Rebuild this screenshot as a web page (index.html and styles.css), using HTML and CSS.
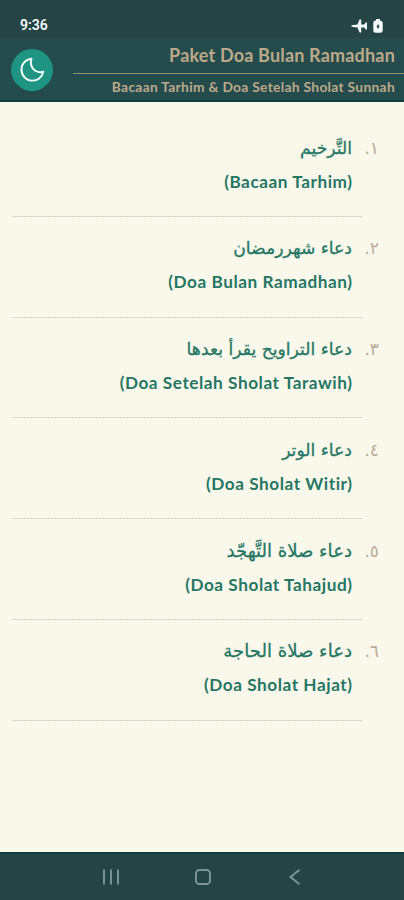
FILE: index.html
```html
<!DOCTYPE html>
<html lang="id">
<head>
    <meta charset="UTF-8">
    <meta name="viewport" content="width=device-width, initial-scale=1.0">
    <title>Paket Doa Bulan Ramadhan</title>
    <link rel="stylesheet" href="styles.css">
</head>
<body>
    <div class="status-bar">
        <span class="time">9:36</span>
        <div class="status-icons">
            <svg width="17" height="16" viewBox="0 0 17 16" fill="#f4fafa">
                <path d="M0.500 7.200L6.500 6.500L8.500 1.500H10.300L10.200 6.600H13.500L14.500 4.500H16V11.500H14.500L13.500 9.400H10.200L10.300 14.500H8.500L6.500 9.500L0.500 8.800Z"/>
            </svg>
            <svg width="10" height="14" viewBox="0 0 10 14">
                <path d="M3 0H7V1.500Q9.700 1.700 9.700 4V11.500Q9.700 13.700 7.500 13.700H2.500Q0.300 13.700 0.300 11.500V4Q0.300 1.700 3 1.500Z" fill="#f4fafa"/>
                <path d="M5 5L6.500 7.500L5 10L3.700 7.500Z" fill="#244446"/>
            </svg>
        </div>
    </div>

    <header class="header">
        <button class="theme-btn" aria-label="Mode malam">
            <svg width="26" height="26" viewBox="0 0 26 26" fill="none" stroke="#f2fffc" stroke-width="1.900" stroke-linejoin="round">
                <path d="M12.500 1.700A11 11 0 1 0 24.300 14.600C17 17.500 9.800 10 12.500 1.700Z"/>
            </svg>
        </button>
        <div class="titles">
            <h1>Paket Doa Bulan Ramadhan</h1>
            <h2>Bacaan Tarhim &amp; Doa Setelah Sholat Sunnah</h2>
        </div>
    </header>

    <main class="list">
        <div class="item">
            <div class="number">١.</div>
            <div class="arabic">التَّرخيم</div>
            <div class="latin">(Bacaan Tarhim)</div>
        </div>
        <div class="item">
            <div class="number">٢.</div>
            <div class="arabic">دعاء شهررمضان</div>
            <div class="latin">(Doa Bulan Ramadhan)</div>
        </div>
        <div class="item">
            <div class="number">٣.</div>
            <div class="arabic">دعاء التراويح يقرأ بعدها</div>
            <div class="latin">(Doa Setelah Sholat Tarawih)</div>
        </div>
        <div class="item">
            <div class="number">٤.</div>
            <div class="arabic">دعاء الوتر</div>
            <div class="latin">(Doa Sholat Witir)</div>
        </div>
        <div class="item">
            <div class="number">٥.</div>
            <div class="arabic wide">دعاء صلاة التَّهجّد</div>
            <div class="latin">(Doa Sholat Tahajud)</div>
        </div>
        <div class="item">
            <div class="number">٦.</div>
            <div class="arabic wide">دعاء صلاة الحاجة</div>
            <div class="latin">(Doa Sholat Hajat)</div>
        </div>
    </main>

    <nav class="nav-bar">
        <svg width="16" height="16" viewBox="0 0 16 16" stroke="#7d9798" stroke-width="1.900">
            <path d="M1 0.500V15.500M8 0.500V15.500M15 0.500V15.500"/>
        </svg>
        <svg width="16" height="16" viewBox="0 0 16 16" fill="none" stroke="#7d9798" stroke-width="1.900">
            <rect x="1" y="1" width="14" height="14" rx="3.500"/>
        </svg>
        <svg width="16" height="16" viewBox="0 0 16 16" fill="none" stroke="#7d9798" stroke-width="1.900">
            <path d="M12.500 0.800L3.500 8L12.500 15.200"/>
        </svg>
    </nav>
</body>
</html>
```
FILE: styles.css
```css
* {
    margin: 0;
    padding: 0;
    box-sizing: border-box;
}

body {
    height: 900px;
    display: flex;
    flex-direction: column;
    background: #faf8eb;
    font-family: Lato, 'DejaVu Sans', sans-serif;
    overflow: hidden;
}

.status-bar {
    height: 38px;
    padding: 13px 21px 0 20px;
    display: flex;
    justify-content: space-between;
    background: #244446;
    color: #f4fafa;
}

.time {
    font-family: Roboto, sans-serif;
    font-size: 14px;
    font-weight: 600;
    line-height: 25px;
}

.status-icons {
    display: flex;
    align-items: center;
    gap: 5px;
}

.header {
    height: 64px;
    display: flex;
    background: #254c4c;
    border-bottom: 2px solid #123e40;
}

.theme-btn {
    width: 42px;
    height: 42px;
    margin: 11px 0 0 11px;
    display: flex;
    align-items: center;
    justify-content: center;
    border: none;
    border-radius: 50%;
    background: #1f9483;
}

.titles {
    flex: 1;
    margin-left: 20px;
    text-align: right;
    color: #bca98a;
    white-space: nowrap;
}

h1 {
    height: 36px;
    padding-right: 9px;
    border-bottom: 1px solid #948c73;
    font-size: 18px;
    letter-spacing: 0.18px;
    line-height: 34px;
}

h2 {
    padding-right: 9px;
    font-size: 13.8px;
    letter-spacing: 0.3px;
    line-height: 26px;
}

.list {
    flex: 1;
    padding: 14px 0 0 12px;
}

.item {
    display: grid;
    grid-template-columns: 340px 10px 17px;
    grid-template-rows: 34px 34px;
    height: 100.8px;
    padding-top: 14.5px;
    background: repeating-linear-gradient(90deg, #d3d1c5 0 2px, #ebe9dc 2px 3px) left bottom / 350px 1px no-repeat;
}

.number {
    grid-column: 2 / 4;
    grid-row: 1;
    direction: rtl;
    font-family: 'DejaVu Sans', sans-serif;
    font-size: 17px;
    line-height: 34px;
    color: #bbaa99;
}

.arabic,
.latin {
    grid-column: 1;
    justify-self: end;
    color: #267664;
    white-space: nowrap;
    line-height: 34px;
}

.arabic {
    grid-row: 1;
    direction: rtl;
    font-family: 'DejaVu Sans', sans-serif;
    font-size: 17.2px;
    -webkit-text-stroke: 0.3px #267664;
}

.arabic.wide {
    font-size: 18.1px;
}

.latin {
    grid-row: 2;
    font-size: 17.2px;
    font-weight: 700;
    letter-spacing: 0.55px;
    margin-right: -0.5px;
}

.nav-bar {
    height: 48px;
    padding: 0 101px 0 103px;
    display: flex;
    align-items: center;
    justify-content: space-between;
    background: #244446;
    border-top: 2px solid #123e40;
}
```
